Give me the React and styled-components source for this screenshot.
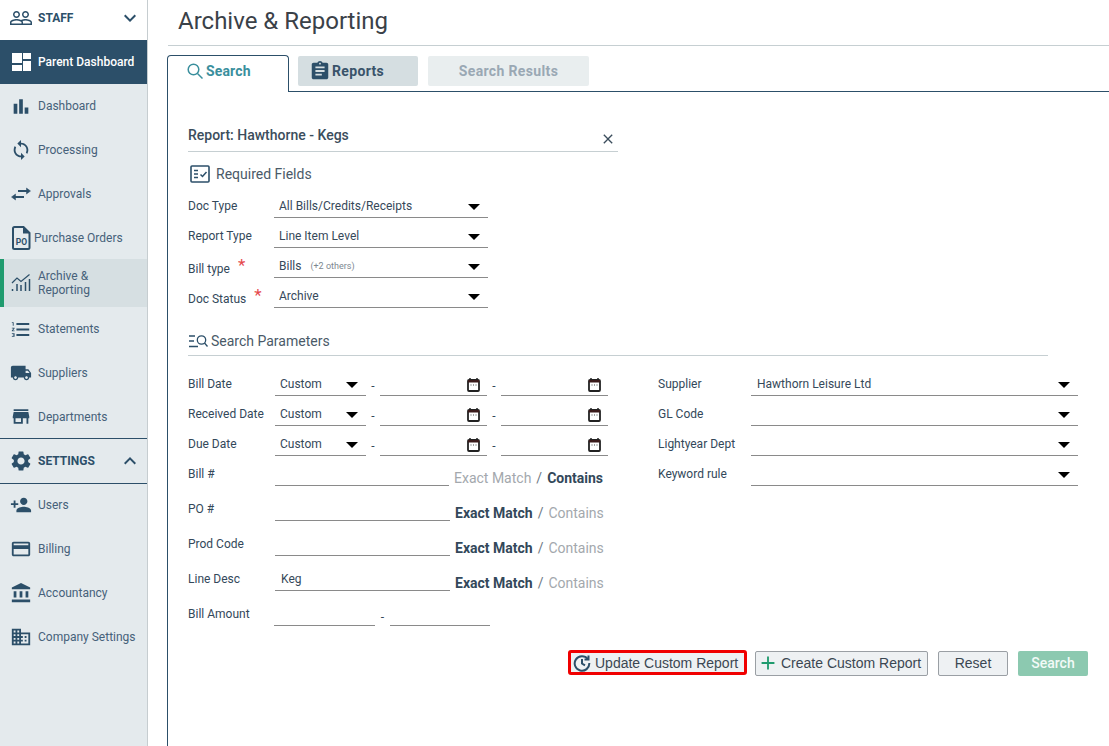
import React from 'react';
import styled, { createGlobalStyle } from 'styled-components';
import {
  MdBarChart,
  MdSync,
  MdFormatListNumbered,
  MdLocalShipping,
  MdStore,
  MdSettings,
  MdPersonAdd,
  MdCreditCard,
  MdAccountBalance,
  MdDomain,
  MdExpandMore,
  MdExpandLess,
  MdAssignment,
  MdAdd,
  MdClose,
  MdPeopleOutline,
} from 'react-icons/md';

const GlobalStyle = createGlobalStyle`
  html, body {
    margin: 0;
    padding: 0;
    background: #fff;
    font-family: Roboto, "Liberation Sans", sans-serif;
    overflow: hidden;
  }
  * { box-sizing: border-box; }
`;

const navy = '#2c4f69';

// Sidebar
const Page = styled.div`
  display: flex;
  width: 1109px;
  height: 746px;
  overflow: hidden;
`;

const Sidebar = styled.nav`
  width: 148px;
  flex-shrink: 0;
  background: #e4eaed;
  border-right: 1px solid #c6cdd0;
`;

const SectionHeader = styled.div`
  display: flex;
  align-items: center;
  height: ${(p) => p.$height}px;
  padding: 0 5px ${(p) => (p.$white ? 4 : 0)}px 9px;
  background: ${(p) => (p.$white ? '#fff' : 'transparent')};
  border-top: ${(p) => (p.$lined ? `1px solid ${navy}` : 'none')};
  border-bottom: ${(p) => (p.$lined ? `1px solid ${navy}` : 'none')};
  color: ${navy};
  font-size: 12px;
  font-weight: 700;

  svg { flex-shrink: 0; color: ${navy}; }
  span { flex: 1; margin-left: 5px; }
`;

const NavGroup = styled.div`
  margin-top: -1px;
`;

const NavItem = styled.div`
  display: flex;
  align-items: center;
  height: ${(p) => p.$height || 44}px;
  padding-left: ${(p) => (p.$selected ? 6 : 10)}px;
  background: ${(p) => (p.$current ? navy : p.$selected ? '#d6dfe2' : 'transparent')};
  border-left: ${(p) => (p.$selected ? '4px solid #1f9b6e' : 'none')};
  color: ${(p) => (p.$current ? '#fff' : '#46617a')};
  font-size: 12px;
  line-height: 14px;
  font-weight: ${(p) => (p.$current ? 500 : 400)};
`;

const NavIcon = styled.span`
  display: flex;
  align-items: center;
  justify-content: center;
  width: 22px;
  height: 22px;
  margin-right: ${(p) => p.$gap ?? 6}px;
  color: ${(p) => (p.$current ? '#fff' : navy)};
  flex-shrink: 0;
`;

// Main area
const Main = styled.main`
  flex: 1;
  display: flex;
  flex-direction: column;
  min-width: 0;
`;

const TitleBar = styled.header`
  height: 46px;
  margin-left: 20px;
  padding: 6px 0 0 10px;
  border-bottom: 1px solid #c6cfd2;
`;

const Title = styled.h1`
  margin: 0;
  color: #3a4148;
  font-size: 24px;
  line-height: 30px;
  font-weight: 400;
`;

const TabBar = styled.div`
  display: flex;
  height: 37px;
  margin: 9px 0 0 19px;
`;

const ActiveTab = styled.div`
  display: flex;
  align-items: center;
  width: 122px;
  height: 37px;
  padding: 0 0 7px 19px;
  border: 1px solid ${navy};
  border-bottom: none;
  border-radius: 4px 4px 0 0;
  color: #3a8f9d;
  font-size: 14px;
  font-weight: 700;
  letter-spacing: 0.15px;

  svg { margin-right: 3px; }
`;

const TabRest = styled.div`
  flex: 1;
  display: flex;
  gap: 10px;
  padding: 1px 0 0 9px;
  border-bottom: 1px solid ${navy};
`;

const Tab = styled.div`
  display: flex;
  align-items: center;
  justify-content: ${(p) => (p.$disabled ? 'center' : 'flex-start')};
  width: ${(p) => p.$width}px;
  height: 30px;
  padding-left: ${(p) => (p.$disabled ? 0 : 11)}px;
  border-radius: 2px;
  background: ${(p) => (p.$disabled ? '#e9eeef' : '#d5dee1')};
  color: ${(p) => (p.$disabled ? '#9aa8b4' : '#39536a')};
  font-size: 14px;
  font-weight: 700;
  letter-spacing: 0.35px;

  svg { color: ${navy}; margin-right: 1px; }
`;

const Panel = styled.div`
  flex: 1;
  margin-left: 19px;
  padding: 33px 21px 0 20px;
  border-left: 1px solid ${navy};
`;

const ReportHead = styled.div`
  display: flex;
  justify-content: space-between;
  width: 430px;
  height: 27px;
  border-bottom: 1px solid #c6cfd2;
  color: #3b4d5c;
  font-size: 14px;
  font-weight: 500;
  line-height: 20px;

  svg { margin: 6px 2px 0 0; color: #3b4d5c; }
`;

const SectionTitle = styled.div`
  display: flex;
  align-items: center;
  width: ${(p) => p.$width || 'auto'};
  height: ${(p) => p.$height}px;
  margin-top: ${(p) => p.$top}px;
  padding-bottom: ${(p) => p.$bottom || 0}px;
  border-bottom: ${(p) => (p.$lined ? '1px solid #c6cfd2' : 'none')};
  color: #4a5a68;
  font-size: 14px;
`;

const SectionIcon = styled.span`
  display: flex;
  margin: ${(p) => p.$margin};
`;

const Row = styled.div`
  display: flex;
  align-items: flex-start;
  height: ${(p) => p.$height || 30}px;
`;

const Label = styled.div`
  width: ${(p) => p.$width || 86}px;
  flex-shrink: 0;
  padding-top: ${(p) => p.$top || 11}px;
  color: #33485a;
  font-size: 12px;
  line-height: 14px;
  white-space: nowrap;
`;

const Required = styled.span`
  margin-left: ${(p) => p.$gap}px;
  color: #e5484d;
  font-size: 17px;
  line-height: 0;
  vertical-align: 2px;
`;

const Field = styled.div`
  display: flex;
  align-items: flex-end;
  width: ${(p) => p.$width}px;
  height: 100%;
  padding: 0 ${(p) => p.$right ?? 8}px 3px ${(p) => p.$left ?? 5}px;
  border-bottom: 1px solid #8a8a8a;
  color: #36495a;
  font-size: 12px;
  line-height: 16px;
  flex-shrink: 0;
`;

const Caret = styled.i`
  width: 0;
  height: 0;
  margin: 0 0 4px auto;
  border-left: 6px solid transparent;
  border-right: 6px solid transparent;
  border-top: 6px solid #000;
`;

const Others = styled.small`
  margin-left: 9px;
  color: #7d8790;
  font-size: 9px;
`;

const Dash = styled.span`
  width: ${(p) => p.$width || 14}px;
  padding-top: ${(p) => p.$top || 13}px;
  text-align: center;
  color: #33485a;
  font-size: 12px;
  line-height: 14px;
  flex-shrink: 0;
`;

const CalendarWrap = styled.span`
  display: flex;
  margin: 0 0 0 auto;
`;

const Columns = styled.div`
  display: grid;
  grid-template-columns: 470px 420px;
  margin-top: 10px;
`;

const Toggle = styled.div`
  display: flex;
  align-items: flex-end;
  height: 100%;
  margin-left: 5px;
  font-size: 14px;
  line-height: 16px;
  white-space: nowrap;
`;

const ToggleOption = styled.span`
  color: ${(p) => (p.$on ? '#33485a' : '#a3a8ad')};
  font-weight: ${(p) => (p.$on ? 700 : 400)};
`;

const Slash = styled.span`
  margin: 0 5px;
  color: #6f7a84;
`;

const Actions = styled.div`
  display: flex;
  justify-content: flex-end;
  align-items: flex-start;
  margin-top: 25px;
`;

const Button = styled.button`
  display: flex;
  align-items: center;
  justify-content: center;
  width: ${(p) => p.$width}px;
  height: 25px;
  margin-left: ${(p) => p.$gap}px;
  padding: 0 0 1px;
  border: 1px solid #9a9fa4;
  border-radius: 2px;
  background: #eef1f3;
  color: #3b4752;
  font-family: "Liberation Sans", Arial, sans-serif;
  font-size: 14px;

  svg { flex-shrink: 0; }
`;

const HighlightButton = styled(Button)`
  justify-content: flex-start;
  margin-top: -1px;
  padding: 0 0 0 2px;
  border: 3px solid #f00000;
  border-radius: 3px;

  svg { margin-right: 4px; }
`;

const CreateButton = styled(Button)`
  justify-content: flex-start;
  padding-left: 1px;

  svg { margin-right: 2px; color: #1f9b6e; }
`;

const PrimaryButton = styled(Button)`
  border: none;
  background: #8cc9b0;
  color: #f2faf7;
  font-family: Roboto, sans-serif;
  font-weight: 500;
`;

// Drawn icons
const ParentIcon = () => (
  <svg width="19" height="18" viewBox="0 0 19 18" fill="#fff">
    <rect x="0" y="0" width="10" height="10" />
    <rect x="11" y="0" width="8" height="6" />
    <rect x="0" y="12" width="10" height="6" />
    <rect x="11" y="8" width="8" height="10" />
  </svg>
);

const ApprovalsIcon = () => (
  <svg width="20" height="14" viewBox="0 0 20 14" fill={navy} stroke={navy}>
    <path d="M7 4h9" strokeWidth="2" />
    <path d="M15.500 1l4 3-4 3z" strokeWidth="0.500" />
    <path d="M13 10H4" strokeWidth="2" />
    <path d="M4.500 7l-4 3 4 3z" strokeWidth="0.500" />
  </svg>
);

const PoIcon = () => (
  <svg width="19" height="24" viewBox="0 0 19 24">
    <path d="M2.500 1h9l6 6v14.500a1.500 1.500 0 0 1-1.500 1.500H2.500A1.500 1.500 0 0 1 1 21.500V2.500A1.500 1.500 0 0 1 2.500 1z" fill="none" stroke={navy} strokeWidth="2" />
    <path d="M11 1v6.500h6.500z" fill={navy} />
    <text x="9.500" y="19" textAnchor="middle" fontSize="8.500" fontWeight="700" fontFamily="Roboto, sans-serif" fill={navy}>PO</text>
  </svg>
);

const ReportingIcon = () => (
  <svg width="20" height="20" viewBox="0 0 20 20" fill="none" stroke={navy} strokeWidth="1.200">
    <path d="M1 10l5-5 4 3.500L18.500 1.500" />
    <path d="M1.500 18v-2M6 18v-7M10 18v-6M14.500 18V9M18.500 18V6" strokeWidth="1.500" />
  </svg>
);

const LensIcon = () => (
  <svg width="16" height="16" viewBox="0 0 16 16" fill="none" stroke="#3a8f9d" strokeWidth="1.500">
    <circle cx="6.500" cy="6.500" r="5.300" />
    <path d="M10.500 10.500L15.500 15.500" />
  </svg>
);

const CheckListIcon = () => (
  <svg width="20" height="18" viewBox="0 0 20 18" fill="none" stroke={navy}>
    <rect x="1" y="1" width="18" height="16" rx="1" strokeWidth="1.600" />
    <path d="M4 5.500h4M4 9h4M4 12.500h4" strokeWidth="1.500" />
    <path d="M10.500 9.500l2 2 4-4.500" strokeWidth="1.500" />
  </svg>
);

const SearchParamsIcon = () => (
  <svg width="20" height="14" viewBox="0 0 20 14" fill="none" stroke={navy} strokeWidth="1.300">
    <path d="M1 2h6M1 7h5M1 12.500h9" />
    <circle cx="13.500" cy="6" r="4.200" />
    <path d="M16.500 9l3 3.500" />
  </svg>
);

const CalendarIcon = () => (
  <svg width="13" height="14" viewBox="0 0 13 14">
    <path d="M3 0v3M10 0v3" stroke="#222" strokeWidth="1.500" />
    <rect x="1" y="2" width="11" height="11" rx="1" fill="none" stroke="#222" strokeWidth="1.800" />
    <rect x="1" y="2" width="11" height="2.500" fill="#3a1a1a" />
    <path d="M3.500 7h1M6 7h1M8.500 7h1" stroke="#444" strokeWidth="1.200" />
  </svg>
);

const UpdateIcon = () => (
  <svg width="18" height="18" viewBox="0 0 18 18" fill="none" stroke={navy} strokeWidth="2">
    <path d="M14.800 5A7.300 7.300 0 1 0 16.300 9" />
    <path d="M15.500 1.500V5.500H11.500" />
    <path d="M9 5v4.500l3 1.800" />
  </svg>
);

const navTop = [
  { text: 'Dashboard', icon: <MdBarChart size={27} /> },
  { text: 'Processing', icon: <MdSync size={24} /> },
  { text: 'Approvals', icon: <ApprovalsIcon /> },
  { text: 'Purchase Orders', icon: <PoIcon />, height: 43, gap: 2 },
  { text: <>Archive &<br />Reporting</>, icon: <ReportingIcon />, height: 48, selected: true },
  { text: 'Statements', icon: <MdFormatListNumbered size={25} /> },
  { text: 'Suppliers', icon: <MdLocalShipping size={24} /> },
  { text: 'Departments', icon: <MdStore size={27} />, height: 43 },
];

const navBottom = [
  { text: 'Users', icon: <MdPersonAdd size={24} /> },
  { text: 'Billing', icon: <MdCreditCard size={24} /> },
  { text: 'Accountancy', icon: <MdAccountBalance size={24} /> },
  { text: 'Company Settings', icon: <MdDomain size={24} /> },
];

const renderNav = (item, i) => (
  <NavItem key={i} $height={item.height} $selected={item.selected}>
    <NavIcon $gap={item.gap}>{item.icon}</NavIcon>
    {item.text}
  </NavItem>
);

const dateRows = ['Bill Date', 'Received Date', 'Due Date'];
const rightRows = [
  { label: 'Supplier', value: 'Hawthorn Leisure Ltd' },
  { label: 'GL Code' },
  { label: 'Lightyear Dept' },
  { label: 'Keyword rule' },
];

const MatchRow = ({ label, value, contains, height, width }) => (
  <Row $height={height}>
    <Label $width={87} $top={height === 35 ? 16 : 11}>{label}</Label>
    <Field $width={width} $left={6}>{value}</Field>
    <Toggle>
      <ToggleOption $on={!contains}>Exact Match</ToggleOption>
      <Slash>/</Slash>
      <ToggleOption $on={contains}>Contains</ToggleOption>
    </Toggle>
  </Row>
);

export default function App() {
  return (
    <Page>
      <GlobalStyle />
      <Sidebar>
        <SectionHeader $white $height={40}>
          <MdPeopleOutline size={24} />
          <span>STAFF</span>
          <MdExpandMore size={24} />
        </SectionHeader>
        <NavItem $current>
          <NavIcon $current><ParentIcon /></NavIcon>
          Parent Dashboard
        </NavItem>
        {navTop.map(renderNav)}
        <SectionHeader $lined $height={46}>
          <MdSettings size={24} />
          <span>SETTINGS</span>
          <MdExpandLess size={24} />
        </SectionHeader>
        <NavGroup>{navBottom.map(renderNav)}</NavGroup>
      </Sidebar>

      <Main>
        <TitleBar>
          <Title>Archive &amp; Reporting</Title>
        </TitleBar>

        <TabBar>
          <ActiveTab>
            <LensIcon />
            Search
          </ActiveTab>
          <TabRest>
            <Tab $width={120}>
              <MdAssignment size={22} />
              Reports
            </Tab>
            <Tab $width={161} $disabled>Search Results</Tab>
          </TabRest>
        </TabBar>

        <Panel>
          <ReportHead>
            Report: Hawthorne - Kegs
            <MdClose size={16} />
          </ReportHead>

          <SectionTitle $top={10} $height={26} $bottom={2}>
            <SectionIcon $margin="0 6px 0 2px"><CheckListIcon /></SectionIcon>
            Required Fields
          </SectionTitle>

          <Row>
            <Label>Doc Type</Label>
            <Field $width={214}>All Bills/Credits/Receipts<Caret /></Field>
          </Row>
          <Row>
            <Label>Report Type</Label>
            <Field $width={214}>Line Item Level<Caret /></Field>
          </Row>
          <Row>
            <Label $top={14}>Bill type<Required $gap={8}>*</Required></Label>
            <Field $width={214}>Bills<Others>(+2 others)</Others><Caret /></Field>
          </Row>
          <Row>
            <Label $top={14}>Doc Status<Required $gap={8}>*</Required></Label>
            <Field $width={214}>Archive<Caret /></Field>
          </Row>

          <SectionTitle $top={20} $height={28} $bottom={2} $lined $width="860px">
            <SectionIcon $margin="0 3px 0 0"><SearchParamsIcon /></SectionIcon>
            Search Parameters
          </SectionTitle>

          <Columns>
            <div>
              {dateRows.map((label) => (
                <Row key={label}>
                  <Label $width={87}>{label}</Label>
                  <Field $width={91} $left={5}>Custom<Caret /></Field>
                  <Dash>-</Dash>
                  <Field $width={107} $right={7}><CalendarWrap><CalendarIcon /></CalendarWrap></Field>
                  <Dash>-</Dash>
                  <Field $width={107} $right={7}><CalendarWrap><CalendarIcon /></CalendarWrap></Field>
                </Row>
              ))}
              <MatchRow label="Bill #" height={30} width={174} contains />
              <MatchRow label="PO #" height={35} width={175} />
              <MatchRow label="Prod Code" height={35} width={175} />
              <MatchRow label="Line Desc" value="Keg" height={35} width={175} />
              <Row $height={35}>
                <Label $top={16}>Bill Amount</Label>
                <Field $width={101} />
                <Dash $width={15} $top={19}>-</Dash>
                <Field $width={100} />
              </Row>
            </div>
            <div>
              {rightRows.map((row) => (
                <Row key={row.label}>
                  <Label $width={93}>{row.label}</Label>
                  <Field $width={327} $left={6}>{row.value}<Caret /></Field>
                </Row>
              ))}
            </div>
          </Columns>

          <Actions>
            <HighlightButton $width={179} $gap={0}>
              <UpdateIcon />
              Update Custom Report
            </HighlightButton>
            <CreateButton $width={173} $gap={8}>
              <MdAdd size={22} />
              Create Custom Report
            </CreateButton>
            <Button $width={70} $gap={10}>Reset</Button>
            <PrimaryButton $width={70} $gap={10}>Search</PrimaryButton>
          </Actions>
        </Panel>
      </Main>
    </Page>
  );
}
